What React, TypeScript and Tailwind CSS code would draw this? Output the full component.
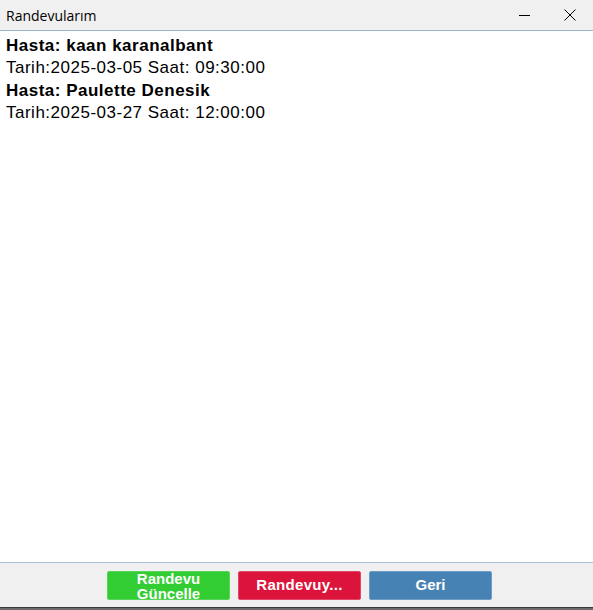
export default function App() {
  const items = [
    { hasta: "kaan karanalbant", tarih: "2025-03-05", saat: "09:30:00" },
    { hasta: "Paulette Denesik", tarih: "2025-03-27", saat: "12:00:00" },
  ];

  return (
    <div className="w-[593px] h-[610px] flex flex-col bg-white overflow-hidden">
      {/* title bar */}
      <div className="h-[31px] flex items-center bg-[#f0f0f0] border-b border-[#99b4d1] shrink-0">
        <div className="pl-[6px] text-[14px] text-black font-['Open_Sans',sans-serif] flex-1">Randevularım</div>
        <div className="w-[46px] h-full flex items-center justify-center">
          <svg width="11" height="11" viewBox="0 0 11 11">
            <line x1="0" y1="5.5" x2="11" y2="5.5" stroke="#000" strokeWidth="1" />
          </svg>
        </div>
        <div className="w-[46px] h-full flex items-center justify-center">
          <svg width="12" height="12" viewBox="0 0 12 12">
            <path d="M0.5 0.5 L11.5 11.5 M11.5 0.5 L0.5 11.5" stroke="#000" strokeWidth="1" />
          </svg>
        </div>
      </div>

      {/* list */}
      <div className="flex-1 px-[6px] pt-[4px] font-['Liberation_Sans',Arial,sans-serif] text-black tracking-[0.5px]">
        {items.map((r) => (
          <div key={r.hasta}>
            <div className="text-[17px] font-bold leading-[21px]">Hasta: {r.hasta}</div>
            <div className="text-[17px] leading-[24px]">
              Tarih:{r.tarih} Saat: {r.saat}
            </div>
          </div>
        ))}
      </div>

      {/* buttons */}
      <div className="h-[45px] shrink-0 bg-[#f0f0f0] border-t border-[#a9c0d6] flex items-start pt-[8px] pl-[107px] gap-[8px] font-['Liberation_Sans',Arial,sans-serif]">
        <button className="w-[123px] h-[29px] rounded-[2px] bg-[#32cd32] text-white text-[15px] font-bold border border-[#5ad35a] overflow-hidden flex flex-col items-center justify-center leading-[15px]">
          <span>Randevu</span>
          <span>Güncelle</span>
        </button>
        <button className="w-[123px] h-[29px] rounded-[2px] bg-[#dc143c] text-white text-[15px] font-bold border border-[#e0486a] tracking-[0.3px]">
          Randevuy...
        </button>
        <button className="w-[123px] h-[29px] rounded-[2px] bg-[#4682b4] text-white text-[15px] font-bold border border-[#6d9cc4]">
          Geri
        </button>
      </div>
      <div className="h-[3px] shrink-0 bg-[#6b6b6b] border-t border-[#3a3a3a]" />
    </div>
  );
}
